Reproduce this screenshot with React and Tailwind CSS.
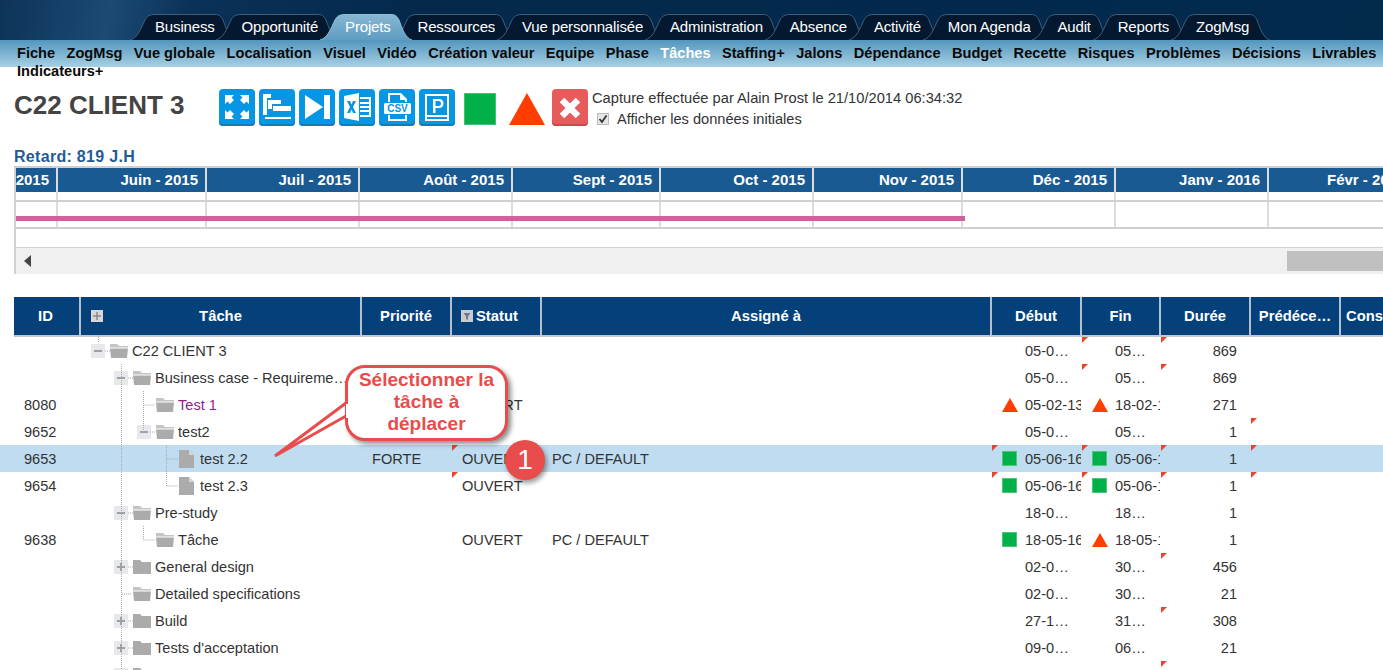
import React from 'react';

const tabs = ['Business', 'Opportunité', 'Projets', 'Ressources', 'Vue personnalisée', 'Administration', 'Absence', 'Activité', 'Mon Agenda', 'Audit', 'Reports', 'ZogMsg'];
const subNav = ['Fiche', 'ZogMsg', 'Vue globale', 'Localisation', 'Visuel', 'Vidéo', 'Création valeur', 'Equipe', 'Phase', 'Tâches', 'Staffing+', 'Jalons', 'Dépendance', 'Budget', 'Recette', 'Risques', 'Problèmes', 'Décisions', 'Livrables', 'Indicateurs+'];
const months = ['2015', 'Juin - 2015', 'Juil - 2015', 'Août - 2015', 'Sept - 2015', 'Oct - 2015', 'Nov - 2015', 'Déc - 2015', 'Janv - 2016', 'Févr - 2016'];

// flags: 3 statut, 5 debut, 6 fin, 7 duree, 8 predecesseur
const rows = [
  { name: 'C22 CLIENT 3', depth: 0, box: 'minus', icon: 'open', start: '05-0…', end: '05…', dur: '869', flags: [6, 7] },
  { name: 'Business case - Requireme…', depth: 1, box: 'minus', icon: 'open', start: '05-0…', end: '05…', dur: '869', flags: [6, 7] },
  { id: '8080', name: 'Test 1', depth: 2, icon: 'open', purple: true, status: 'OUVERT', startMark: 'tri', endMark: 'tri', start: '05-02-13', end: '18-02-13', dur: '271' },
  { id: '9652', name: 'test2', depth: 2, box: 'minus', icon: 'open', start: '05-0…', end: '05…', dur: '1', flags: [8] },
  { id: '9653', name: 'test 2.2', depth: 3, icon: 'file', active: true, prio: 'FORTE', status: 'OUVERT', who: 'PC / DEFAULT', startMark: 'sq', endMark: 'sq', start: '05-06-16', end: '05-06-16', dur: '1', flags: [3, 5, 6, 7, 8] },
  { id: '9654', name: 'test 2.3', depth: 3, icon: 'file', status: 'OUVERT', startMark: 'sq', endMark: 'sq', start: '05-06-16', end: '05-06-16', dur: '1', flags: [3, 5, 6, 7, 8] },
  { name: 'Pre-study', depth: 1, box: 'minus', icon: 'open', start: '18-0…', end: '18…', dur: '1' },
  { id: '9638', name: 'Tâche', depth: 2, icon: 'open', status: 'OUVERT', who: 'PC / DEFAULT', startMark: 'sq', endMark: 'tri', start: '18-05-16', end: '18-05-16', dur: '1' },
  { name: 'General design', depth: 1, box: 'plus', icon: 'closed', start: '02-0…', end: '30…', dur: '456', flags: [7] },
  { name: 'Detailed specifications', depth: 1, icon: 'open', start: '02-0…', end: '30…', dur: '21' },
  { name: 'Build', depth: 1, box: 'plus', icon: 'closed', start: '27-1…', end: '31…', dur: '308', flags: [7] },
  { name: "Tests d'acceptation", depth: 1, box: 'plus', icon: 'closed', start: '09-0…', end: '06…', dur: '21' },
  { name: 'QC LIVE', depth: 1, box: 'plus', icon: 'closed', start: '06-0…', end: '06…', dur: '', flags: [7] },
];

function Tab({ label, active }) {
  const fill = active ? 'url(#tabActive)' : '#04192f';
  const stroke = active ? '#8fbdd6' : '#3f5f7c';
  return (
    <div className={`relative flex h-[26px] -ml-[19.2px] first:ml-0 ${active ? 'z-10' : ''}`}>
      <svg width="25" height="26" className="shrink-0">
        <path d="M0 26 C8 24 11 14 15 6 C17 2 20 0.5 25 0.5 V26 Z" fill={fill} />
        <path d="M0 26 C8 24 11 14 15 6 C17 2 20 0.5 25 0.5" fill="none" stroke={stroke} />
      </svg>
      <div className={`h-[26px] border-t pt-[3px] text-[15px] leading-[17px] tracking-[-0.15px] text-white ${active ? 'border-[#8fbdd6] bg-[linear-gradient(to_bottom,#86b7d3,#5f9cc2)]' : 'border-[#3f5f7c] bg-[#04192f]'}`}>
        {label}
      </div>
      <svg width="21" height="26" className="shrink-0">
        <path d="M0 0.5 C4 0.5 6 2 8 6 C11 14 14 24 21 26 H0 Z" fill={fill} />
        <path d="M0 0.5 C4 0.5 6 2 8 6 C11 14 14 24 21 26" fill="none" stroke={stroke} />
      </svg>
    </div>
  );
}

function BlueBtn({ children }) {
  return (
    <div className="h-[37px] w-9 shrink-0 rounded-[4px] bg-[#0796e3] shadow-[inset_0_-2px_0_#0b7fbe]">
      <svg width="36" height="36" viewBox="0 0 36 36" fill="#fff">{children}</svg>
    </div>
  );
}

function Folder({ type }) {
  if (type === 'file') {
    return (
      <svg width="16" height="18" viewBox="0 0 16 18" className="shrink-0">
        <path d="M0 0H10L15 5V18H0Z" fill="#ababab" />
        <path d="M10 0V5H15Z" fill="#d5d5d5" />
      </svg>
    );
  }
  if (type === 'closed') {
    return (
      <svg width="18" height="16" viewBox="0 0 18 16" className="shrink-0">
        <path d="M0 1H7L9 3H18V15H0Z" fill="#ababab" />
      </svg>
    );
  }
  return (
    <svg width="18" height="16" viewBox="0 0 18 16" className="shrink-0">
      <path d="M0 1H7L9 3H18V4.5H0Z" fill="#c4c4c4" />
      <path d="M0 5.5H18L17 15H1Z" fill="#ababab" />
    </svg>
  );
}

function Box({ type }) {
  return (
    <span className="flex h-[14px] w-[14px] shrink-0 items-center justify-center bg-[#e6e8ec]">
      <svg width="10" height="10" viewBox="0 0 10 10">
        <path d="M1 5H9" stroke="#a0a0a0" strokeWidth="2" />
        {type === 'plus' && <path d="M5 1V9" stroke="#a0a0a0" strokeWidth="2" />}
      </svg>
    </span>
  );
}

function Flag() {
  return <span className="absolute left-[1px] top-0 h-[6px] w-[6px] bg-[#e8452c] [clip-path:polygon(0_0,100%_0,0_100%)]" />;
}

function Mark({ type }) {
  if (type === 'sq') return <span className="-mt-[2px] mr-2 h-[15px] w-[15px] shrink-0 border border-[#4fc67e] bg-[#00b14a]" />;
  if (type === 'tri') {
    return (
      <svg width="16" height="14" viewBox="0 0 16 14" className="-mt-[2px] mr-[7px] shrink-0">
        <path d="M8 0L16 14H0Z" fill="#ff3d00" />
      </svg>
    );
  }
  return <span className="mr-2 w-[15px] shrink-0" />;
}

function Cell({ flag, className, children }) {
  return (
    <div className={`relative flex h-[27px] items-center pt-[2px] ${className}`}>
      {flag && <Flag />}
      {children}
    </div>
  );
}

function Row({ r }) {
  const has = (n) => r.flags && r.flags.includes(n);
  return (
    <div className={`grid h-[27px] grid-cols-[80px_281px_90px_90px_450px_90px_79px_90px_90px_1fr] ${r.active ? 'bg-[#bfdcf1]' : ''}`}>
      <Cell className="pl-6">{r.id}</Cell>
      <Cell className="">
        <div className={`flex items-center ${['pl-[11px]', 'pl-[34px]', 'pl-[57px]', 'pl-[80px]'][r.depth]}`}>
          {r.box ? <Box type={r.box} /> : <span className="w-[14px] shrink-0" />}
          <span className="ml-[5px]"><Folder type={r.icon} /></span>
          <span className={`whitespace-nowrap ${r.icon === 'file' ? 'ml-[5px]' : 'ml-[4px]'} ${r.purple ? 'text-[#8e1f8e]' : ''}`}>{r.name}</span>
        </div>
      </Cell>
      <Cell className="pl-[11px]">{r.prio}</Cell>
      <Cell flag={has(3)} className="pl-[11px]">{r.status}</Cell>
      <Cell className="pl-[11px]">{r.who}</Cell>
      <Cell flag={has(5)} className="overflow-hidden pl-[11px] whitespace-nowrap">
        <Mark type={r.startMark} />
        <span>{r.start}</span>
      </Cell>
      <Cell flag={has(6)} className="overflow-hidden pl-[11px] whitespace-nowrap">
        <Mark type={r.endMark} />
        <span>{r.end}</span>
      </Cell>
      <Cell flag={has(7)} className="justify-end pr-[13px]">{r.dur}</Cell>
      <Cell flag={has(8)} className="" />
      <Cell className="" />
    </div>
  );
}

function TimelineCells({ h }) {
  return (
    <div className={`grid grid-cols-[44px_149px_153px_153px_148px_153px_149px_153px_153px_1fr] ${h}`}>
      {months.map((m) => (
        <div key={m} className="border-r-2 border-[#dcdcdc] last:border-r-0" />
      ))}
    </div>
  );
}

export default function App() {
  return (
    <div className="relative h-[670px] w-[1383px] overflow-hidden bg-white font-['Liberation_Sans',Arial,sans-serif] text-[14.6px] text-[#333]">
      <svg width="0" height="0" className="absolute">
        <defs>
          <linearGradient id="tabActive" x1="0" y1="0" x2="0" y2="1">
            <stop offset="0" stopColor="#86b7d3" />
            <stop offset="1" stopColor="#5f9cc2" />
          </linearGradient>
        </defs>
      </svg>

      {/* Top tabs */}
      <header className="flex h-10 items-end bg-[linear-gradient(100deg,#0d3358_0%,#1b4a73_8%,#0a3157_14%,#04294d_30%,#012a4d_100%)] pl-[130px]">
        {tabs.map((t) => (
          <Tab key={t} label={t} active={t === 'Projets'} />
        ))}
      </header>

      {/* Sub menu */}
      <nav className="h-[27px] bg-[linear-gradient(to_bottom,#5396bf,#a7d0e3)]">
        <div className="flex flex-wrap gap-x-[11.4px] pl-[17px] pt-[4px] text-[14.6px] font-bold leading-[18px] text-[#0a0a0a]">
          {subNav.map((s) => (
            <span key={s} className={s === 'Tâches' ? 'text-white' : ''}>{s}</span>
          ))}
        </div>
      </nav>

      {/* Title and actions */}
      <div className="mt-[22px] flex h-[38px] items-start">
        <h1 className="w-[219px] shrink-0 pl-[14px] pt-[1px] text-[26px] font-bold leading-[30px] text-[#444]">C22 CLIENT 3</h1>
        <div className="flex gap-1">
          <BlueBtn>
            <path d="M6 6H15L12.5 8.5L15 11L11 15L8.5 12.5L6 15Z" />
            <path d="M30 6H21L23.5 8.5L21 11L25 15L27.5 12.5L30 15Z" />
            <path d="M6 30H15L12.5 27.5L15 25L11 21L8.5 23.5L6 21Z" />
            <path d="M30 30H21L23.5 27.5L21 25L25 21L27.5 23.5L30 21Z" />
          </BlueBtn>
          <BlueBtn>
            <path d="M4 5H12V9H8V26H4Z" />
            <path d="M9 11H22V15H13V20H9Z" />
            <path d="M14 17H32V22H14Z" />
            <path d="M6 28H32V30H6Z" />
          </BlueBtn>
          <BlueBtn>
            <path d="M6 6L24 18L6 30Z" />
            <path d="M25 6H31V30H25Z" />
          </BlueBtn>
          <BlueBtn>
            <path d="M5 7L20 4V32L5 29Z" />
            <path d="M21 8H32V28H21V26H30V23H21V21H30V19H21V17H30V15H21V13H30V10H21Z" />
            <path d="M8 12H11L12.5 15.5L14 12H17L14 18L17 24H14L12.5 20.5L11 24H8L11 18Z" fill="#0796e3" />
          </BlueBtn>
          <BlueBtn>
            <path d="M9 4H22L28 10V13H26V11H21V6H11V13H9ZM9 26H11V30H26V26H28V32H9Z" />
            <rect x="5" y="14" width="27" height="11" rx="1.5" />
            <text x="18.5" y="23" textAnchor="middle" fontSize="10" fontWeight="700" fill="#0796e3" fontFamily="Liberation Sans">CSV</text>
          </BlueBtn>
          <BlueBtn>
            <path d="M6 5H30V32H6ZM8 7V26H28V7ZM8 28V30H28V28Z" fillRule="evenodd" />
            <path d="M14 10H20C23 10 24.5 12 24.5 14.5S23 19 20 19H16.5V24H14ZM16.5 12V17H19.5C21 17 22 16 22 14.5S21 12 19.5 12Z" fillRule="evenodd" />
          </BlueBtn>
        </div>
        <div className="ml-[9px] mt-[4px] h-8 w-8 shrink-0 border border-[#3fc274] bg-[#00b14a]" />
        <svg width="36" height="32" viewBox="0 0 36 32" className="ml-[13px] mt-[4px] shrink-0">
          <path d="M18 0L36 32H0Z" fill="#ff3d00" />
        </svg>
        <div className="ml-[7px] flex h-[37px] w-9 shrink-0 items-center justify-center rounded-[4px] bg-[#e65c5c] shadow-[inset_0_-2px_0_#c94a4a]">
          <svg width="24" height="24" viewBox="0 0 24 24">
            <path d="M4 4L20 20M20 4L4 20" stroke="#fff" strokeWidth="6.5" />
          </svg>
        </div>
        <div className="ml-1 leading-[20px] text-[#333]">
          <div className="-mt-[1px] h-[20px] text-[14.7px]">Capture effectuée par Alain Prost le 21/10/2014 06:34:32</div>
          <div className="ml-[5px] mt-[1px] flex items-center">
            <span className="flex h-3 w-3 items-center justify-center border border-[#bbb] bg-[#e6e6e6]">
              <svg width="10" height="10" viewBox="0 0 10 10"><path d="M1.5 5L4 8L8.5 1.5" fill="none" stroke="#333" strokeWidth="1.8" /></svg>
            </span>
            <span className="ml-2">Afficher les données initiales</span>
          </div>
        </div>
      </div>

      {/* Retard */}
      <div className="mt-[22px] h-[17px] pl-[14px] text-base font-bold leading-4 tracking-[0.3px] text-[#1f5c96]">Retard: 819 J.H</div>

      {/* Timeline */}
      <section className="ml-[14px] border-l-2 border-t-2 border-[#d0d0d0]">
        <div className="grid h-6 grid-cols-[42px_149px_153px_153px_148px_153px_149px_153px_153px_1fr] bg-[#1a5a92] text-[15px] font-bold text-white">
          {months.map((m, i) => (
            <div key={m} className={`flex items-center overflow-hidden whitespace-nowrap border-r-2 border-[#dcdcdc] last:border-r-0 ${i === months.length - 1 ? 'pl-[58px]' : 'justify-end pr-[7px]'}`}>
              {m}
            </div>
          ))}
        </div>
        <TimelineCells h="h-2 -ml-[2px]" />
        <div className="relative border-y-2 border-[#d0d0d0]">
          <TimelineCells h="h-[25px] -ml-[2px]" />
          <div className="absolute left-0 top-[14px] h-[5px] w-[949px] bg-[#c9659a]" />
        </div>
        <div className="h-[19px] border-b border-[#d0d0d0]" />
        <div className="flex h-[26px] items-center bg-[#f0f0f0] pl-2 pr-0">
          <svg width="7" height="12" viewBox="0 0 7 12"><path d="M7 0V12L0 6Z" fill="#444" /></svg>
          <div className="ml-auto h-5 w-[96px] bg-[#c0c0c0]" />
        </div>
      </section>

      {/* Task table */}
      <section className="mt-[23px]">
        <div className="ml-[14px] grid h-[38px] grid-cols-[67px_281px_90px_90px_450px_90px_79px_90px_90px_1fr] bg-[#04417a] text-[14.8px] font-bold text-white">
          <div className="flex items-center justify-center border-r-2 border-[#b4c0cc] pr-[2px]">ID</div>
          <div className="relative flex items-center justify-center border-r-2 border-[#b4c0cc]">
            <span className="absolute left-[10px] flex h-3 w-3 items-center justify-center bg-[#d8d8d8]">
              <svg width="8" height="8" viewBox="0 0 8 8"><path d="M0 4H8M4 0V8" stroke="#8a8a8a" strokeWidth="1.5" /></svg>
            </span>
            Tâche
          </div>
          <div className="flex items-center justify-center border-r-2 border-[#b4c0cc]">Priorité</div>
          <div className="flex items-center gap-[3px] border-r-2 border-[#b4c0cc] pl-[9px]">
            <svg width="12" height="12" viewBox="0 0 12 12"><rect width="12" height="12" fill="#c8ccd2" /><path d="M2.5 3H9.5L7 6.5V10L5 9V6.5Z" fill="#6f7a85" /></svg>
            Statut
          </div>
          <div className="flex items-center justify-center border-r-2 border-[#b4c0cc]">Assigné à</div>
          <div className="flex items-center justify-center border-r-2 border-[#b4c0cc]">Début</div>
          <div className="flex items-center justify-center border-r-2 border-[#b4c0cc]">Fin</div>
          <div className="flex items-center justify-center border-r-2 border-[#b4c0cc]">Durée</div>
          <div className="flex items-center justify-center whitespace-nowrap border-r-2 border-[#b4c0cc]">Prédéce…</div>
          <div className="flex items-center pl-[5px]">Cons</div>
        </div>
        <div className="ml-[14px] h-[2px] bg-[#c4c8cc]" />
        <div className="relative">
          {rows.map((r) => (
            <Row key={r.name} r={r} />
          ))}
          {/* dotted tree connectors */}
          <svg width="200" height="340" className="pointer-events-none absolute left-0 top-0" fill="none" stroke="#a8a8a8" strokeDasharray="1 1">
            <path d="M98.5 0V6" />
            <path d="M105 14H110" />
            <path d="M121.5 27V333" />
            <path d="M128 41H133" />
            <path d="M143.5 54V95M143.5 68H155" />
            <path d="M150 95H155" />
            <path d="M166.5 108V149M166.5 122H178M166.5 149H178" />
            <path d="M128 176H133" />
            <path d="M143.5 189V203H155" />
            <path d="M128 230H133M122 257H132M128 284H133M128 311H133" />
          </svg>
        </div>
      </section>

      {/* Callout */}
      <div className="absolute left-[273px] top-[364px] h-[96px] w-[240px]">
        <svg width="240" height="96" className="absolute left-0 top-0">
          <path d="M73 39L2 92L73 52" fill="#fff" stroke="#e84c4c" strokeWidth="3" strokeLinejoin="miter" />
        </svg>
        <div className="absolute left-[72px] top-[1px] flex h-[76px] w-[163px] items-center justify-center rounded-[20px] border-[3px] border-[#e84c4c] bg-white pb-[2px] text-center text-[19px] font-bold leading-[22px] text-[#e84c4c] shadow-[3px_3px_5px_rgba(0,0,0,0.45)]">
          <span>Sélectionner la<br />tâche à<br />déplacer</span>
        </div>
        <svg width="12" height="14" className="absolute left-[71px] top-[40px]">
          <rect x="2" y="0" width="8" height="14" fill="#fff" />
        </svg>
      </div>
      <div className="absolute left-[505px] top-[440px] flex h-10 w-10 items-center justify-center rounded-full bg-[#e84c4c] text-[28px] text-white shadow-[2px_3px_5px_rgba(0,0,0,0.4)]">1</div>
    </div>
  );
}
